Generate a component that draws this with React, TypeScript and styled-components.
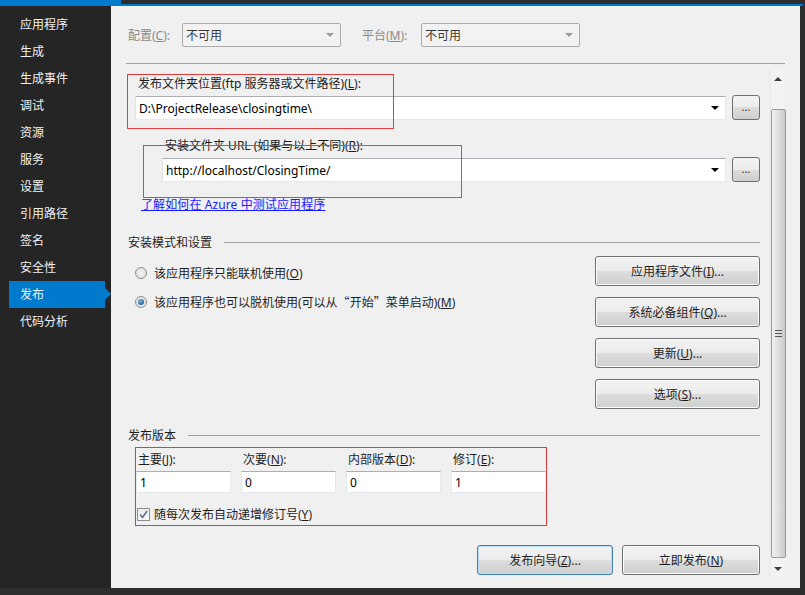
import React from "react";
import styled, { createGlobalStyle } from "styled-components";

const GlobalStyle = createGlobalStyle`
  html, body { margin: 0; padding: 0; background: #2d2d30; }
  #root { width: 805px; height: 595px; overflow: hidden; }
  * { box-sizing: border-box; }
`;

const uiFont = `"Segoe UI", "Noto Sans", "Noto Sans CJK SC", sans-serif`;

const Frame = styled.div`
  width: 805px;
  height: 595px;
  display: flex;
  flex-direction: column;
  background: #2d2d30;
  font-family: ${uiFont};
  font-size: 12px;
`;

const TopStrip = styled.div`
  height: 4px;
  display: flex;
  background: #2d2d30;
`;

const ActiveTab = styled.div`
  width: 121px;
  background: #007acc;
`;

const BlueLine = styled.div`
  height: 2px;
  margin-right: 2px;
  background: #007acc;
`;

const Body = styled.div`
  height: 582px;
  display: flex;
`;

const Sidebar = styled.nav`
  width: 111px;
  background: #252526;
  padding-top: 5px;
`;

const NavItem = styled.div<{ $active?: boolean }>`
  position: relative;
  height: 27px;
  line-height: 27px;
  width: 96px;
  margin-left: 9px;
  padding-left: 11px;
  color: #f1f1f1;
  background: ${(p) => (p.$active ? "#007acc" : "transparent")};
  &::after {
    content: "";
    display: ${(p) => (p.$active ? "block" : "none")};
    position: absolute;
    right: -6px;
    top: 7px;
    border-top: 6px solid transparent;
    border-bottom: 6px solid transparent;
    border-left: 6px solid #007acc;
  }
`;

const Main = styled.main`
  width: 689px;
  background: #f0f0f0;
  padding: 0 15px;
  display: flex;
  flex-direction: column;
  color: #1e1e1e;
`;

const ConfigRow = styled.div`
  margin-top: 17px;
  height: 24px;
  display: flex;
  align-items: center;
  padding-left: 2px;
`;

const DimLabel = styled.span<{ $w: number; $ml?: number }>`
  width: ${(p) => p.$w}px;
  margin-left: ${(p) => p.$ml ?? 0}px;
  color: #8a8a8a;
`;

const DisabledCombo = styled.div`
  width: 159px;
  height: 24px;
  border: 1px solid #acacac;
  border-radius: 2px;
  background: #f2f2f2;
  display: flex;
  align-items: center;
  justify-content: space-between;
  padding: 0 6px 0 3px;
  color: #3a3a3a;
`;

const Arrow = styled.span<{ $color: string }>`
  width: 0;
  height: 0;
  border-left: 4px solid transparent;
  border-right: 4px solid transparent;
  border-top: 4px solid ${(p) => p.$color};
`;

const Separator = styled.div`
  margin-top: 16px;
  height: 1px;
  background: #a0a0a0;
`;

const ScrollArea = styled.div`
  flex: 1;
  display: flex;
`;

const Content = styled.div`
  position: relative;
  flex: 1;
  padding-right: 10px;
  display: flex;
  flex-direction: column;
`;

const FieldLabel = styled.div<{ $mt: number; $pl: number }>`
  margin-top: ${(p) => p.$mt}px;
  padding-left: ${(p) => p.$pl}px;
  height: 16px;
  line-height: 16px;
`;

const PathRow = styled.div<{ $pl: number }>`
  margin-top: 4px;
  padding-left: ${(p) => p.$pl}px;
  display: flex;
  gap: 6px;
  height: 24px;
`;

const ComboInput = styled.div`
  flex: 1;
  height: 24px;
  background: #fff;
  border: 1px solid #e3e9ef;
  border-top-color: #abadb3;
  border-left-color: #e2e3ea;
  display: flex;
  align-items: center;
  justify-content: space-between;
  padding: 0 6px 0 3px;
  color: #000;
`;

const BrowseButton = styled.div`
  width: 28px;
  height: 25px;
  margin-top: -1px;
  border: 1px solid #707070;
  border-radius: 3px;
  background: linear-gradient(#f3f3f3 0%, #ececec 50%, #dddddd 50%, #cfcfcf 100%);
  display: flex;
  align-items: center;
  justify-content: center;
  font-size: 11px;
  color: #222;
  padding-bottom: 2px;
`;

const Annotation = styled.div<{ $l: number; $t: number; $w: number; $h: number; $c: string }>`
  position: absolute;
  left: ${(p) => p.$l}px;
  top: ${(p) => p.$t}px;
  width: ${(p) => p.$w}px;
  height: ${(p) => p.$h}px;
  border: 1px solid ${(p) => p.$c};
  pointer-events: none;
`;

const HelpLink = styled.a`
  margin-top: 15px;
  padding-left: 15px;
  height: 16px;
  line-height: 16px;
  color: #1a1aff;
  text-decoration: underline;
  letter-spacing: 0.1px;
`;

const SectionHeader = styled.div<{ $mt: number }>`
  margin-top: ${(p) => p.$mt}px;
  padding-left: 2px;
  height: 16px;
  display: flex;
  align-items: center;
  gap: 12px;
  color: #1e1e1e;
  &::after {
    content: "";
    flex: 1;
    height: 1px;
    background: #a0a0a0;
  }
`;

const InstallArea = styled.div`
  margin-top: 6px;
  display: flex;
  justify-content: space-between;
`;

const RadioList = styled.div`
  padding: 9px 0 0 9px;
  display: flex;
  flex-direction: column;
  gap: 13px;
`;

const RadioRow = styled.label`
  height: 16px;
  display: flex;
  align-items: center;
  gap: 7px;
`;

const RadioCircle = styled.span<{ $on?: boolean }>`
  width: 12px;
  height: 12px;
  border-radius: 50%;
  border: 1px solid #8e8f8f;
  background: radial-gradient(circle, #f4f4f4 0%, #dcdcdc 100%);
  display: flex;
  align-items: center;
  justify-content: center;
  &::after {
    content: "";
    display: ${(p) => (p.$on ? "block" : "none")};
    width: 6px;
    height: 6px;
    border-radius: 50%;
    background: radial-gradient(circle at 40% 35%, #7ab6e6 0%, #25588b 80%);
  }
`;

const CjkQuote = styled.span`
  font-family: "Noto Sans CJK SC", sans-serif;
`;

const ButtonColumn = styled.div`
  width: 165px;
  display: flex;
  flex-direction: column;
  gap: 11px;
`;

const Button = styled.button<{ $w?: number; $default?: boolean }>`
  width: ${(p) => (p.$w ? `${p.$w}px` : "100%")};
  height: 30px;
  border: 1px solid ${(p) => (p.$default ? "#3c7fb1" : "#707070")};
  border-radius: 3px;
  background: linear-gradient(#f3f3f3 0%, #ebebeb 50%, #dddddd 50%, #cfcfcf 100%);
  box-shadow: ${(p) => (p.$default ? "inset 0 0 0 1px #b9e0f7" : "inset 0 0 0 1px #fcfcfc")};
  font-family: ${uiFont};
  font-size: 12px;
  color: #1e1e1e;
  padding: 0;
`;

const VersionBox = styled.div`
  margin: 4px 0 0 9px;
  width: 412px;
  height: 79px;
  border: 1px solid #e03a3a;
  padding: 4px 0 0 0;
`;

const VersionGrid = styled.div`
  display: grid;
  grid-template-columns: repeat(4, 95px);
  column-gap: 10px;
`;

const VersionLabel = styled.div`
  height: 16px;
  line-height: 16px;
  padding-left: 2px;
`;

const VersionInput = styled.div`
  margin-top: 3px;
  height: 22px;
  background: #fff;
  border: 1px solid #e3e9ef;
  border-top-color: #abadb3;
  display: flex;
  align-items: center;
  padding-left: 3px;
  color: #000;
`;

const CheckRow = styled.label`
  margin-top: 14px;
  height: 14px;
  display: flex;
  align-items: center;
  gap: 4px;
  padding-left: 1px;
`;

const CheckBox = styled.span`
  width: 13px;
  height: 13px;
  border: 1px solid #8f8f8f;
  background: linear-gradient(#ececec, #f8f8f8);
  display: flex;
  align-items: center;
  justify-content: center;
`;

const ActionRow = styled.div`
  margin-top: 19px;
  display: flex;
  justify-content: flex-end;
  gap: 9px;
`;

const ScrollBar = styled.div`
  width: 15px;
  margin: 6px 0 11px;
  background: #f3f3f3;
  border-left: 1px solid #e8e8e8;
  display: flex;
  flex-direction: column;
  align-items: center;
`;

const ScrollArrow = styled.div<{ $up?: boolean }>`
  height: 17px;
  width: 100%;
  display: flex;
  align-items: center;
  justify-content: center;
  &::after {
    content: "";
    border-left: 4px solid transparent;
    border-right: 4px solid transparent;
    ${(p) => (p.$up ? "border-bottom: 4px solid #404040;" : "border-top: 4px solid #404040;")}
  }
`;

const Thumb = styled.div`
  margin-top: 22px;
  width: 15px;
  height: 449px;
  border: 1px solid #9a9a9a;
  border-radius: 2px;
  background: linear-gradient(90deg, #f0f0f0 0%, #e2e2e2 45%, #c9c9c9 100%);
  display: flex;
  align-items: center;
  justify-content: center;
`;

const Grip = styled.div`
  width: 7px;
  height: 7px;
  background: repeating-linear-gradient(#555 0 1px, transparent 1px 3px);
`;

const Spacer = styled.div`
  flex: 1;
`;

const RightEdge = styled.div`
  flex: 1;
  background: #2d2d30;
`;

const navItems = [
  "应用程序",
  "生成",
  "生成事件",
  "调试",
  "资源",
  "服务",
  "设置",
  "引用路径",
  "签名",
  "安全性",
  "发布",
  "代码分析",
];

const versions = [
  { label: "主要", key: "J", value: "1" },
  { label: "次要", key: "N", value: "0" },
  { label: "内部版本", key: "D", value: "0" },
  { label: "修订", key: "E", value: "1" },
];

const sideButtons = [
  { text: "应用程序文件", key: "I" },
  { text: "系统必备组件", key: "Q" },
  { text: "更新", key: "U" },
  { text: "选项", key: "S" },
];

export default function App() {
  return (
    <Frame>
      <GlobalStyle />
      <TopStrip>
        <ActiveTab />
      </TopStrip>
      <BlueLine />
      <Body>
        <Sidebar>
          {navItems.map((n) => (
            <NavItem key={n} $active={n === "发布"}>
              {n}
            </NavItem>
          ))}
        </Sidebar>
        <Main>
          <ConfigRow>
            <DimLabel $w={54}>
              配置(<u>C</u>):
            </DimLabel>
            <DisabledCombo>
              不可用
              <Arrow $color="#9a9a9a" />
            </DisabledCombo>
            <DimLabel $w={59} $ml={21}>
              平台(<u>M</u>):
            </DimLabel>
            <DisabledCombo>
              不可用
              <Arrow $color="#9a9a9a" />
            </DisabledCombo>
          </ConfigRow>
          <Separator />
          <ScrollArea>
            <Content>
              <FieldLabel $mt={12} $pl={12}>
                发布文件夹位置(ftp 服务器或文件路径)(<u>L</u>):
              </FieldLabel>
              <PathRow $pl={9}>
                <ComboInput>
                  D:\ProjectRelease\closingtime\
                  <Arrow $color="#000" />
                </ComboInput>
                <BrowseButton>...</BrowseButton>
              </PathRow>
              <FieldLabel $mt={18} $pl={39}>
                安装文件夹 URL (如果与以上不同)(<u>R</u>):
              </FieldLabel>
              <PathRow $pl={36}>
                <ComboInput>
                  http://localhost/ClosingTime/
                  <Arrow $color="#000" />
                </ComboInput>
                <BrowseButton>...</BrowseButton>
              </PathRow>
              <HelpLink>了解如何在 Azure 中测试应用程序</HelpLink>

              <SectionHeader $mt={21}>安装模式和设置</SectionHeader>
              <InstallArea>
                <RadioList>
                  <RadioRow>
                    <RadioCircle />
                    <span>
                      该应用程序只能联机使用(<u>O</u>)
                    </span>
                  </RadioRow>
                  <RadioRow>
                    <RadioCircle $on />
                    <span>
                      该应用程序也可以脱机使用(可以从<CjkQuote>“</CjkQuote>开始<CjkQuote>”</CjkQuote>菜单启动)(<u>M</u>)
                    </span>
                  </RadioRow>
                </RadioList>
                <ButtonColumn>
                  {sideButtons.map((b) => (
                    <Button key={b.key}>
                      {b.text}(<u>{b.key}</u>)...
                    </Button>
                  ))}
                </ButtonColumn>
              </InstallArea>

              <SectionHeader $mt={18}>发布版本</SectionHeader>
              <VersionBox>
                <VersionGrid>
                  {versions.map((v) => (
                    <div key={v.key}>
                      <VersionLabel>
                        {v.label}(<u>{v.key}</u>):
                      </VersionLabel>
                      <VersionInput>{v.value}</VersionInput>
                    </div>
                  ))}
                </VersionGrid>
                <CheckRow>
                  <CheckBox>
                    <svg width="9" height="9" viewBox="0 0 9 9">
                      <path d="M1 4.5 L3.5 7.5 L8 1" fill="none" stroke="#5c6f8f" strokeWidth="1.6" />
                    </svg>
                  </CheckBox>
                  <span>
                    随每次发布自动递增修订号(<u>Y</u>)
                  </span>
                </CheckRow>
              </VersionBox>

              <ActionRow>
                <Button $w={136} $default>
                  发布向导(<u>Z</u>)...
                </Button>
                <Button $w={138}>
                  立即发布(<u>N</u>)
                </Button>
              </ActionRow>

              <Annotation $l={1} $t={10} $w={267} $h={55} $c="#e83a3a" />
              <Annotation $l={17} $t={81} $w={319} $h={53} $c="#d94848" />
            </Content>
            <ScrollBar>
              <ScrollArrow $up />
              <Thumb>
                <Grip />
              </Thumb>
              <Spacer />
              <ScrollArrow />
            </ScrollBar>
          </ScrollArea>
        </Main>
        <RightEdge />
      </Body>
    </Frame>
  );
}
